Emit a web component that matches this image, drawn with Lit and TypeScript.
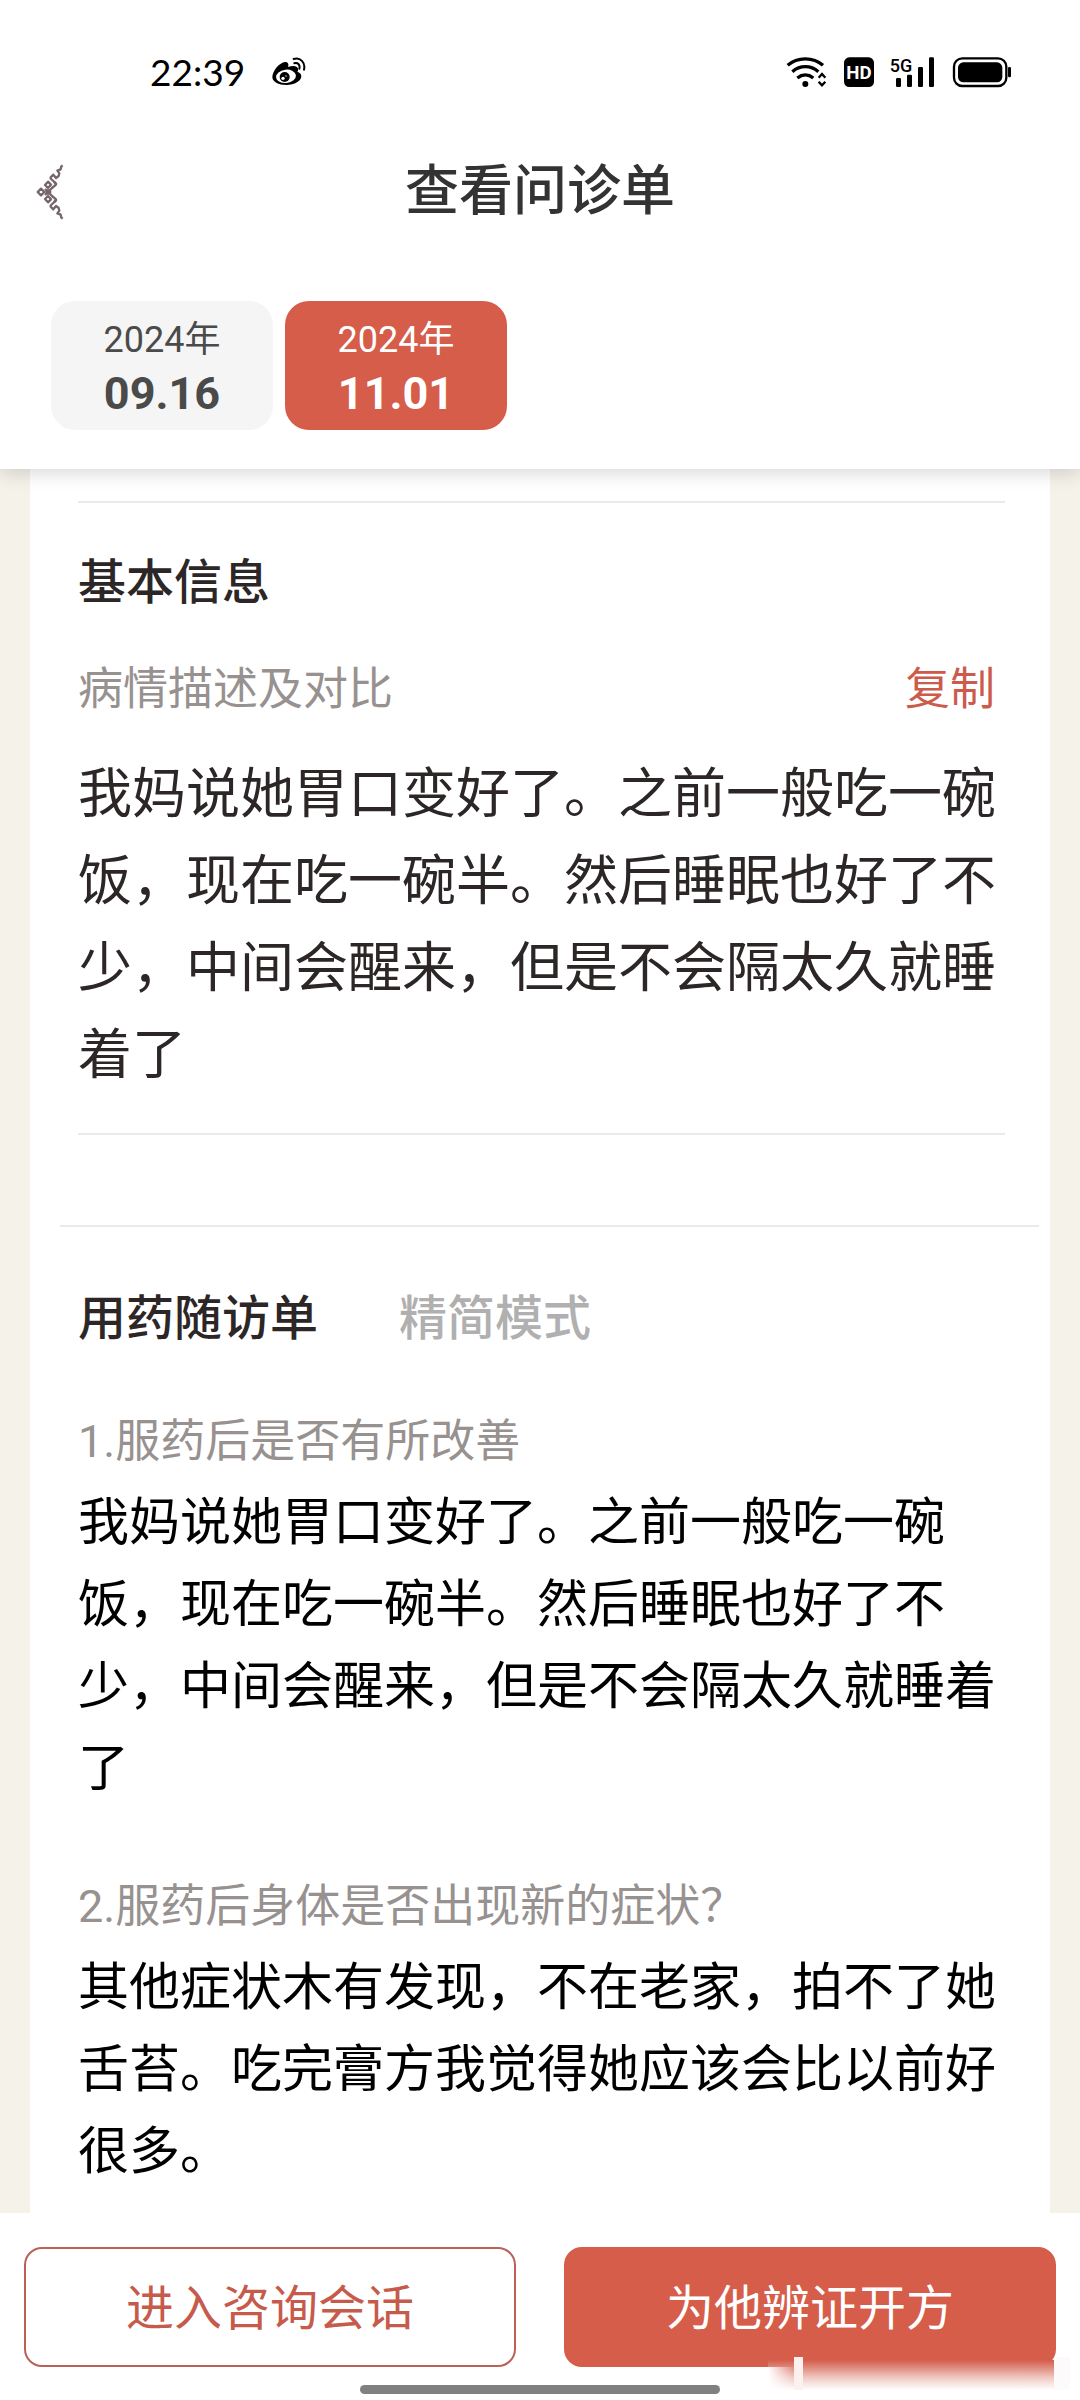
import { LitElement, html, css, svg } from "lit";
import { customElement, property, state } from "lit/decorators.js";
import { classMap } from "lit/directives/class-map.js";

const FONT = css`Roboto, "Noto Sans CJK SC", sans-serif`;

@customElement("status-bar")
class StatusBar extends LitElement {
  @property() time = "";

  static styles = css`
    :host {
      display: flex;
      align-items: center;
      justify-content: space-between;
      padding: 56px 68px 0 150px;
      font-family: "Noto Sans", sans-serif;
      color: #000;
    }
    .group {
      display: flex;
      align-items: center;
    }
    .left {
      gap: 26px;
    }
    .right {
      gap: 16px;
    }
    .time {
      font-family: Lato, sans-serif;
      font-size: 37px;
      line-height: 32px;
    }
    svg {
      display: block;
      flex: none;
    }
    .hd {
      font: 700 56px Roboto, sans-serif;
    }
    .net {
      font: 500 54px Roboto, sans-serif;
    }
  `;

  render() {
    return html`
      <div class="group left">
        <span class="time">${this.time}</span>
        <svg width="36" height="30" viewBox="420 52 108 90" aria-hidden="true">
          <path
            d="M424 112C424 94 446 68 462 67C471 67 474 73 471 82C484 77 499 77 501 87C502 91 501 94 499 96C506 98 511 103 511 110C511 124 491 136 466 136C442 136 424 126 424 112Z"
          />
          <ellipse cx="465" cy="110" rx="30" ry="20" fill="#fff" transform="rotate(-6 465 110)" />
          <circle cx="461" cy="112" r="15" />
          <circle cx="456" cy="116" r="5" fill="#fff" />
          <circle cx="465" cy="109" r="2" fill="#fff" />
          <path
            d="M488 58C508 52 524 68 519 90M490 71C501 68 508 76 505 87"
            fill="none"
            stroke="#000"
            stroke-width="6"
            stroke-linecap="round"
          />
        </svg>
      </div>
      <div class="group right">
        <svg width="42" height="32" viewBox="50 47 126 96" aria-label="Wi-Fi" role="img">
          <g fill="none" stroke="#000" stroke-width="10">
            <path d="M55 75C84 49 132 49 161 75" />
            <path d="M69 94C92 74 124 74 147 94" />
            <path d="M84 113C99 101 117 101 132 113" />
          </g>
          <circle cx="108" cy="131" r="9" />
          <path
            d="M148 112L158 101L168 112M148 124L158 135L168 124"
            fill="none"
            stroke="#000"
            stroke-width="7"
          />
        </svg>
        <svg width="30" height="32" viewBox="219 47 90 96">
          <rect x="219" y="51" width="90" height="89" rx="16" />
          <text class="hd" x="264" y="117" text-anchor="middle" fill="#fff">HD</text>
        </svg>
        <svg width="46" height="32" viewBox="363 47 138 96">
          <text class="net" x="362" y="95">5G</text>
          <g>
            <rect x="381" y="113" width="15" height="27" rx="4" />
            <rect x="414" y="103" width="15" height="37" rx="4" />
            <rect x="447" y="80" width="15" height="60" rx="4" />
            <rect x="480" y="51" width="15" height="89" rx="4" />
          </g>
        </svg>
        <svg width="60" height="32" viewBox="546 47 180 96" aria-label="Battery" role="img">
          <rect x="552" y="54" width="157" height="83" rx="25" fill="none" stroke="#000" stroke-width="7" />
          <rect x="564" y="66" width="133" height="60" rx="16" />
          <rect x="714" y="80" width="9" height="31" rx="4" />
        </svg>
      </div>
    `;
  }
}

interface Visit {
  year: string;
  day: string;
}

interface Answer {
  question: string;
  text: string;
}

const halfOrnament = svg`
  <path d="M75 159L96 138L108 128L102 119" />
  <path d="M84 119L93 128L84 138L75 129Z" />
  <path d="M90 108L100 98L108 108L116 102L118 94L112 86L122 82L124 73L128 70" />
  <path d="M90 108L110 126" />
`;

@customElement("app-root")
class AppRoot extends LitElement {
  @state() private selected = 1;

  private visits: Visit[] = [
    { year: "2024年", day: "09.16" },
    { year: "2024年", day: "11.01" },
  ];

  private description =
    "我妈说她胃口变好了。之前一般吃一碗饭，现在吃一碗半。然后睡眠也好了不少，中间会醒来，但是不会隔太久就睡着了";

  private answers: Answer[] = [
    {
      question: "1.服药后是否有所改善",
      text: "我妈说她胃口变好了。之前一般吃一碗饭，现在吃一碗半。然后睡眠也好了不少，中间会醒来，但是不会隔太久就睡着了",
    },
    {
      question: "2.服药后身体是否出现新的症状？",
      text: "其他症状木有发现，不在老家，拍不了她舌苔。吃完膏方我觉得她应该会比以前好很多。",
    },
  ];

  static styles = css`
    :host {
      display: flex;
      flex-direction: column;
      min-height: 100vh;
      background: #f5f2ea;
      font-family: ${FONT};
      color: #2c2626;
    }
    * {
      box-sizing: border-box;
    }
    button {
      font: inherit;
      color: inherit;
      margin: 0;
      padding: 0;
      border: 0;
      background: none;
      cursor: pointer;
    }
    h1,
    h2,
    h3,
    p {
      margin: 0;
    }
    .top {
      background: #fff;
      box-shadow: 0 4px 18px rgba(0, 0, 0, 0.16);
      padding-bottom: 39px;
      z-index: 1;
    }
    .bar {
      display: grid;
      grid-template-columns: 1fr auto 1fr;
      align-items: center;
      height: 132px;
      margin: 38px 0 43px;
      padding: 0 36px;
    }
    .back {
      justify-self: start;
    }
    .back svg {
      display: block;
      fill: none;
      stroke: #75666a;
      stroke-width: 7;
      stroke-linejoin: round;
    }
    .title {
      font-size: 54px;
      line-height: 72px;
      font-weight: 500;
      color: #333;
    }
    .visits {
      display: flex;
      gap: 12px;
      padding: 0 51px;
    }
    .visit {
      display: flex;
      flex-direction: column;
      align-items: center;
      width: 222px;
      height: 129px;
      padding-top: 12px;
      border-radius: 24px;
      background: #f5f5f5;
      color: #4a4a4a;
    }
    .visit.on {
      background: #d55d4a;
      color: #fff;
    }
    .year {
      font-size: 36px;
      line-height: 54px;
    }
    .day {
      font-size: 45px;
      line-height: 54px;
      font-weight: 700;
    }
    .card {
      flex: 1;
      margin: 0 30px;
      padding-top: 32px;
      background: #fff;
    }
    .info {
      margin: 0 45px 0 48px;
      padding: 44px 0 34px;
      border: solid #eaeaea;
      border-width: 2px 0;
    }
    .heading {
      font-size: 48px;
      line-height: 72px;
      font-weight: 500;
    }
    .row {
      display: flex;
      justify-content: space-between;
      padding: 38px 10px 28px 0;
      font-size: 45px;
      line-height: 66px;
    }
    .muted {
      color: #979190;
    }
    .row button {
      color: #cb5b4a;
    }
    .description {
      font-size: 54px;
      line-height: 87px;
    }
    .follow {
      margin: 90px 11px 0 30px;
      padding: 56px 34px 0 18px;
      border-top: 2px solid #eaeaea;
    }
    .modes {
      display: flex;
      gap: 81px;
    }
    .modes button {
      font-weight: 500;
      color: #b0b0b0;
    }
    .answer {
      padding: 54px 0 10px;
    }
    .question {
      padding-bottom: 7px;
      font-size: 45px;
      line-height: 66px;
      font-weight: 400;
    }
    .text {
      font-size: 51px;
      line-height: 82px;
      color: #000;
    }
    .bottom {
      position: relative;
      padding: 34px 24px 6px;
      background: #fff;
    }
    .actions {
      display: grid;
      grid-template-columns: 1fr 1fr;
      gap: 48px;
    }
    .action {
      height: 120px;
      padding-top: 3px;
      border: 2px solid #bb6157;
      border-radius: 18px;
      font-size: 48px;
      line-height: 72px;
      color: #c65b4c;
      background: #fff;
    }
    .action.primary {
      border-color: #d55d4a;
      color: #fff;
      background: #d55d4a;
    }
    .home {
      width: 360px;
      height: 9px;
      margin: 18px auto 0;
      border-radius: 5px;
      background: #808080;
    }
    .smudge {
      position: absolute;
      right: 0;
      bottom: 8px;
      pointer-events: none;
    }
  `;

  render() {
    return html`
      <header class="top">
        <status-bar time="22:39"></status-bar>
        <div class="bar">
          <button class="back" aria-label="返回">
            <svg width="28" height="56" viewBox="48 66 84 168">
              <path d="M63 140L73 150L63 160L53 150Z" />
              <path d="M76 150H94M84 142V158" />
              ${halfOrnament}
              <g transform="translate(0 300) scale(1 -1)">${halfOrnament}</g>
            </svg>
          </button>
          <h1 class="title">查看问诊单</h1>
        </div>
        <nav class="visits">
          ${this.visits.map(
            (v, i) => html`
              <button
                class=${classMap({ visit: true, on: i === this.selected })}
                aria-pressed=${i === this.selected}
                @click=${() => (this.selected = i)}
              >
                <span class="year">${v.year}</span>
                <span class="day">${v.day}</span>
              </button>
            `
          )}
        </nav>
      </header>

      <main class="card">
        <section class="info">
          <h2 class="heading">基本信息</h2>
          <div class="row">
            <span class="muted">病情描述及对比</span>
            <button>复制</button>
          </div>
          <p class="description">${this.description}</p>
        </section>
        <section class="follow">
          <div class="modes heading">
            <h2 class="heading">用药随访单</h2>
            <button>精简模式</button>
          </div>
          ${this.answers.map(
            (a) => html`
              <article class="answer">
                <h3 class="question muted">${a.question}</h3>
                <p class="text">${a.text}</p>
              </article>
            `
          )}
        </section>
      </main>

      <footer class="bottom">
        <div class="actions">
          <button class="action">进入咨询会话</button>
          <button class="action primary">为他辨证开方</button>
        </div>
        <div class="home"></div>
        <svg class="smudge" width="320" height="36" viewBox="0 0 320 36" aria-hidden="true">
          <defs>
            <linearGradient id="fade" x1="0" y1="0" x2="0" y2="1">
              <stop offset="0" stop-color="#d55d4a" />
              <stop offset="0.25" stop-color="#e08a7e" />
              <stop offset="0.6" stop-color="#f1cbc5" />
              <stop offset="1" stop-color="#fff" />
            </linearGradient>
            <linearGradient id="edge" x1="0" y1="0" x2="1" y2="0">
              <stop offset="0" stop-color="#fff" />
              <stop offset="1" stop-color="#fff" stop-opacity="0" />
            </linearGradient>
          </defs>
          <rect x="8" y="4" width="286" height="30" fill="url(#fade)" />
          <rect x="8" y="11" width="26" height="24" fill="url(#edge)" />
          <rect x="294" y="1" width="16" height="33" fill="#fcfafa" />
          <rect x="34" y="1" width="9" height="33" fill="#fbf1ef" />
        </svg>
      </footer>
    `;
  }
}
